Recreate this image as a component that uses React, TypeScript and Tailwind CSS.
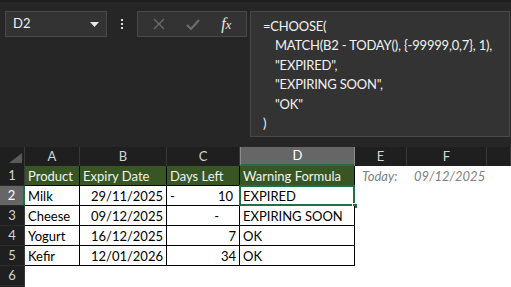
import React from 'react';

const font = { fontFamily: 'Lato, "Open Sans", sans-serif' };

const cols = ['A', 'B', 'C', 'D', 'E', 'F', ''];

type Cell = { text?: React.ReactNode; align?: 'left' | 'right' | 'between' | 'center' };

const rows: Cell[][] = [
  [{ text: 'Product' }, { text: 'Expiry Date' }, { text: 'Days Left' }, { text: 'Warning Formula' }],
  [{ text: 'Milk' }, { text: '29/11/2025', align: 'right' }, { text: ['-', '10'], align: 'between' }, { text: 'EXPIRED' }],
  [{ text: 'Cheese' }, { text: '09/12/2025', align: 'right' }, { text: '-', align: 'center' }, { text: 'EXPIRING SOON' }],
  [{ text: 'Yogurt' }, { text: '16/12/2025', align: 'right' }, { text: '7', align: 'right' }, { text: 'OK' }],
  [{ text: 'Kefir' }, { text: '12/01/2026', align: 'right' }, { text: '34', align: 'right' }, { text: 'OK' }],
];

const FormulaBar: React.FC = () => (
  <div className="h-[147px] relative bg-[#262626] border-t-2 border-[#1e1e1e]">
    <div className="flex items-start pt-[9px] pl-[5px]">
      <div className="w-[102px] h-[26px] bg-[#333333] border border-[#484848] flex items-center justify-between pl-[7px] pr-[7px] text-[13px] text-[#f0f0f0]">
        <span>D2</span>
        <svg width="9" height="5" viewBox="0 0 9 5"><path d="M0 0h9L4.5 5z" fill="#e8e8e8" /></svg>
      </div>
      <div className="w-[30px] h-[26px] flex flex-col items-center justify-center gap-[2px]">
        <span className="w-[2px] h-[2px] bg-[#e0e0e0]" />
        <span className="w-[2px] h-[2px] bg-[#e0e0e0]" />
        <span className="w-[2px] h-[2px] bg-[#e0e0e0]" />
      </div>
      <div className="w-[110px] h-[26px] bg-[#333333] border border-[#484848] flex items-center justify-around px-[4px]">
        <svg width="12" height="12" viewBox="0 0 12 12"><path d="M1 1l10 10M11 1L1 11" stroke="#6b6b6b" strokeWidth="1.4" /></svg>
        <svg width="14" height="11" viewBox="0 0 14 11"><path d="M1 6l4 4 8-9" stroke="#6b6b6b" strokeWidth="2.2" fill="none" /></svg>
        <span className="text-[16px] italic text-[#e8e8e8]" style={{ fontFamily: '"Liberation Serif", serif' }}>
          f<span className="text-[13px]">x</span>
        </span>
      </div>
      <div className="ml-[3px] w-[260px] h-[126px] bg-[#333333] border border-[#484848] pl-[12px] pt-[5px] text-[13px] leading-[19.4px] tracking-[-0.2px] text-[#f2f2f2] whitespace-nowrap">
        <div>=CHOOSE(</div>
        <div className="pl-[12px]">MATCH(B2 - TODAY(), {'{'}-99999,0,7{'}'}, 1),</div>
        <div className="pl-[12px]">"EXPIRED",</div>
        <div className="pl-[12px]">"EXPIRING SOON",</div>
        <div className="pl-[12px]">"OK"</div>
        <div>)</div>
      </div>
    </div>
  </div>
);

const Sheet: React.FC = () => (
  <div className="grid grid-cols-[25px_55px_87px_73px_115px_52px_80px_1fr] grid-rows-[19px_20px_20px_20px_20px_20px_20px_20px] text-[13px]">
    {/* column headers */}
    <div className="relative bg-[#1f1f1f] border-r border-[#3a3a3a]">
      <svg className="absolute right-[2px] bottom-[3px]" width="13" height="10" viewBox="0 0 13 10"><path d="M13 0V10H0z" fill="#5a5a5a" /></svg>
    </div>
    {cols.map((c, i) =>
      c === 'D' ? (
        <div key={i} className="bg-[#666666] border-x border-[#8c8c8c] border-b-2 border-b-[#1e7145] flex items-center justify-center text-white">{c}</div>
      ) : (
        <div key={i} className="bg-[#1f1f1f] border-r border-[#3a3a3a] flex items-center justify-center text-[#d4d4d4]">{c}</div>
      )
    )}

    {Array.from({ length: 7 }).map((_, r) => {
      const data = rows[r];
      return (
        <React.Fragment key={r}>
          <div
            className={
              r === 1
                ? 'bg-[#666666] border-r-2 border-[#1e7145] border-b border-b-[#2a2a2a] flex items-center justify-center pt-[1px] text-white'
                : 'bg-[#1f1f1f] border-r border-[#3a3a3a] border-b border-b-[#2a2a2a] flex items-center justify-center pt-[1px] text-[#d4d4d4]'
            }
          >
            {r + 1}
          </div>
          {cols.map((c, ci) => {
            const cell = data?.[ci];
            if (!data || ci > 3) {
              return (
                <div key={ci} className="bg-white flex items-center pt-[2px] text-[#808080] italic whitespace-nowrap">
                  {r === 0 && c === 'E' && <span className="pl-[7px]">Today:</span>}
                  {r === 0 && c === 'F' && <span className="pl-[7px]">09/12/2025</span>}
                </div>
              );
            }
            const head = r === 0;
            const selected = r === 1 && ci === 3;
            const base = head ? 'bg-[#375623] text-[#f2f2f2]' : 'bg-white text-black';
            let content: React.ReactNode = <span className="pl-[3px]">{cell?.text}</span>;
            if (cell?.align === 'right') content = <span className="ml-auto pr-[3px]">{cell.text}</span>;
            if (cell?.align === 'center') content = <span className="ml-auto mr-[20px]">{cell.text}</span>;
            if (cell?.align === 'between' && Array.isArray(cell.text))
              content = (
                <>
                  <span className="pl-[3px]">{cell.text[0]}</span>
                  <span className="ml-auto pr-[6px]">{cell.text[1]}</span>
                </>
              );
            return (
              <div key={ci} className={`${base} relative flex items-center pt-[2px] whitespace-nowrap border-r border-b border-black`}>
                {content}
                {selected && (
                  <>
                    <div className="absolute -left-[1px] -top-[1px] -right-[1px] -bottom-[1px] border-2 border-[#1e7145]" />
                    <div className="absolute -right-[4px] -bottom-[4px] w-[6px] h-[6px] bg-[#1e7145] border border-white" />
                  </>
                )}
              </div>
            );
          })}
        </React.Fragment>
      );
    })}
  </div>
);

export default function App() {
  return (
    <div className="w-[511px] h-[287px] overflow-hidden bg-[#262626]" style={font}>
      <FormulaBar />
      <Sheet />
    </div>
  );
}
